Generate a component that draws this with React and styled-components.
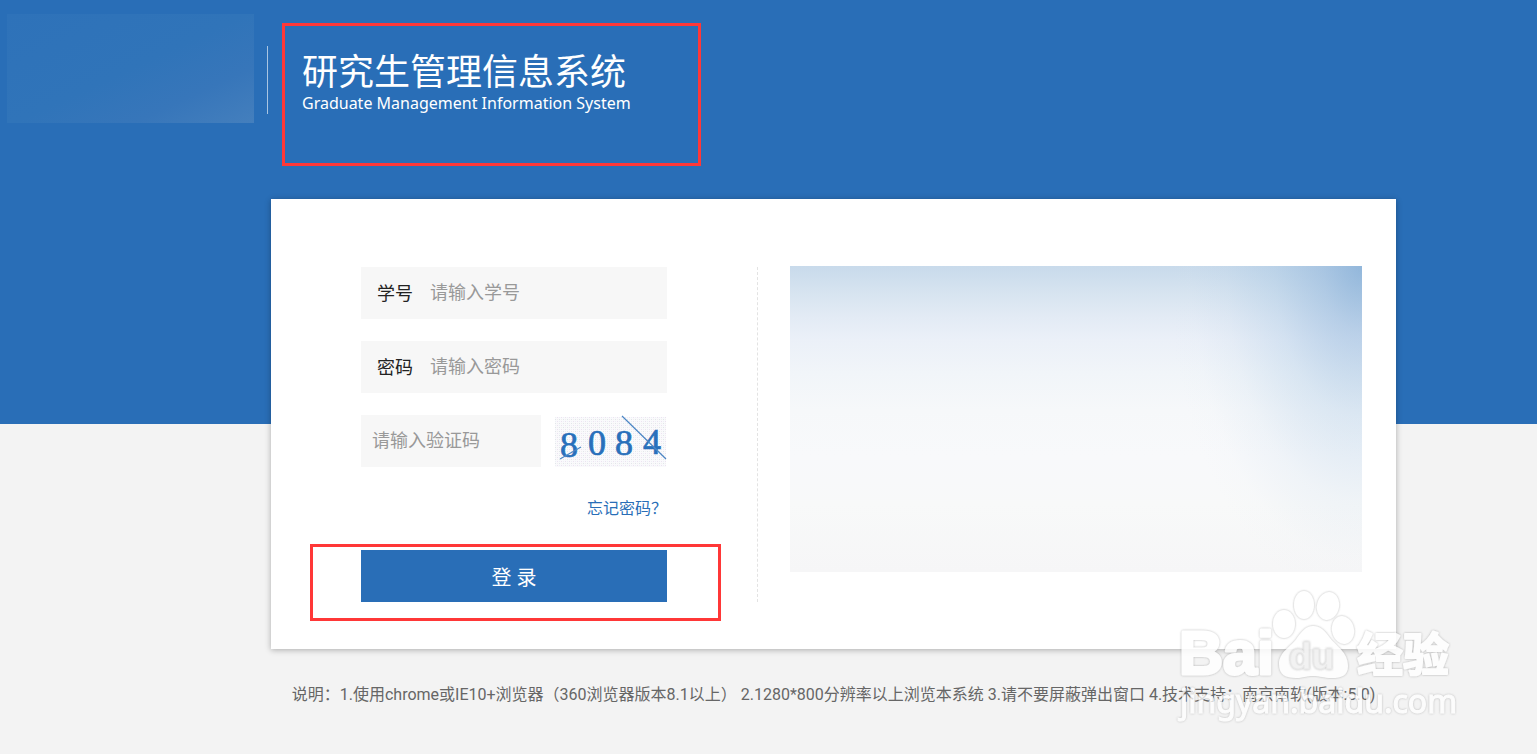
import React from "react";
import styled, { createGlobalStyle } from "styled-components";

const blue = "#296eb7";
const red = "#ff3737";

const GlobalStyle = createGlobalStyle`
  *, *::before, *::after { box-sizing: border-box; }
  body {
    margin: 0;
    background: #f3f3f3;
    font-family: "Noto Sans", "Noto Sans CJK SC", sans-serif;
  }
  input, button { font-family: inherit; }
`;

const Page = styled.div`
  position: relative;
  display: flex;
  flex-direction: column;
  min-height: 100vh;
  background: linear-gradient(${blue} 0 424px, #f3f3f3 424px);
`;

const Header = styled.header`
  display: flex;
  align-items: flex-start;
  height: 199px;
  padding: 14px 7px 0;
`;

const CrestPlate = styled.div`
  flex: none;
  width: 247px;
  height: 109px;
  background: linear-gradient(155deg, #2e72b9 0%, #3074b9 50%, #3776ba 75%, #447fbd 100%);
`;

const HeaderRule = styled.div`
  flex: none;
  width: 1px;
  height: 68px;
  margin: 32px 14px 0 13px;
  background: #a9c5e2;
`;

const TitleFrame = styled.div`
  width: 419px;
  height: 143px;
  margin-top: 9px;
  padding: 24px 17px;
  border: 3px solid ${red};
  color: #fff;
  white-space: nowrap;
`;

const Title = styled.h1`
  margin: 0;
  font-size: 36px;
  line-height: 44px;
  font-weight: 400;
`;

const Subtitle = styled.p`
  margin: 0;
  font-size: 16px;
  line-height: 18px;
`;

const Card = styled.main`
  display: flex;
  min-height: 450px;
  margin: 0 141px 0 271px;
  padding: 68px 34px 47px 90px;
  background: #fff;
  box-shadow: 0 1px 6px rgba(0, 0, 0, 0.3);
`;

const Form = styled.form`
  flex: none;
  display: flex;
  flex-direction: column;
  width: 306px;
`;

const Field = styled.div`
  display: flex;
  align-items: center;
  flex: 1;
  height: 52px;
  padding: 0 ${(p) => (p.$compact ? "11px" : "16px")};
  background: #f7f7f7;
`;

const FieldRow = styled.div`
  display: flex;
  margin-bottom: 22px;
`;

const FieldLabel = styled.label`
  flex: none;
  margin-right: 17px;
  color: #222;
  font-size: 18px;
  line-height: 24px;
`;

const Input = styled.input`
  flex: 1;
  min-width: 0;
  width: 100%;
  height: 48px;
  padding: 0 0 2px;
  border: 0;
  outline: 0;
  background: transparent;
  color: #222;
  font-size: 18px;
  &::placeholder { color: #999; opacity: 1; }
`;

const CaptchaImage = styled.svg`
  flex: none;
  display: block;
  width: 112px;
  height: 52px;
  margin-left: 14px;
`;

const ForgotLink = styled.a`
  align-self: flex-end;
  margin: 7px 0 30px;
  color: ${blue};
  font-size: 16px;
  line-height: 24px;
  text-decoration: none;
`;

const SubmitArea = styled.div`
  position: relative;
`;

const SubmitFrame = styled.div`
  position: absolute;
  inset: -6px -54px -19px -51px;
  border: 3px solid ${red};
  pointer-events: none;
`;

const SubmitButton = styled.button`
  display: block;
  width: 100%;
  height: 52px;
  padding: 0;
  border: 0;
  background: ${blue};
  color: #fff;
  font-size: 20px;
  white-space: pre;
  cursor: pointer;
`;

const Divider = styled.div`
  flex: none;
  margin: 0 32px 0 90px;
  border-left: 1px dashed #e3e3e3;
`;

const Photo = styled.div`
  flex: 1;
  height: 306px;
  margin-top: -1px;
  background:
    radial-gradient(ellipse 34% 110% at 100% 0%, rgba(116, 163, 210, 0.64) 0%, rgba(130, 172, 215, 0.46) 20%, rgba(150, 188, 223, 0.28) 45%, rgba(180, 206, 231, 0.13) 70%, rgba(215, 228, 242, 0.04) 88%, rgba(230, 238, 246, 0) 100%),
    linear-gradient(#c8daeb 0%, #d7e4f0 9%, #e3ebf5 17%, #ebf0f8 24%, #f1f5f9 35%, #f6f8fa 47%, #f8f9fb 62%, #f8f9f9 78%, #f6f6f7 100%);
`;

const Footnote = styled.footer`
  padding: 34px 141px 0 271px;
  color: #666;
  font-family: Roboto, "Noto Sans CJK SC", sans-serif;
  font-size: 16px;
  line-height: 24px;
  text-align: center;
  white-space: nowrap;
`;

const Watermark = styled.svg`
  position: absolute;
  right: 77px;
  bottom: 24px;
  width: 290px;
  height: 150px;
  pointer-events: none;
`;

function Captcha() {
  return (
    <CaptchaImage viewBox="0 0 112 52" role="img" aria-label="8084">
      <defs>
        <pattern id="speckle" width="4" height="4" patternUnits="userSpaceOnUse">
          <rect width="4" height="4" fill="#fafafc" />
          <rect width="1" height="1" fill="#e2e6ea" />
          <rect x="2" y="2" width="1" height="1" fill="#ece2f1" />
          <rect x="2" width="1" height="1" fill="#f0f0f0" />
          <rect y="2" width="1" height="1" fill="#edf1f5" />
        </pattern>
      </defs>
      <rect y="2" width="111" height="50" fill="url(#speckle)" />
      <g fill="#2870bb" stroke="#2870bb" strokeWidth="0.7" fontFamily='"Liberation Serif", serif' fontSize="36">
        <text x="5" y="42">8</text>
        <text x="33" y="40">0</text>
        <text x="60" y="40">8</text>
        <text x="88" y="39">4</text>
      </g>
      <path d="M5 44 L26 32 M67 1 L111 44" stroke="#4b86c4" strokeWidth="1.2" fill="none" />
    </CaptchaImage>
  );
}

function BaiduWatermark() {
  return (
    <Watermark viewBox="0 0 290 150" aria-hidden="true">
      <defs>
        <filter id="edge" x="-10%" y="-10%" width="120%" height="120%">
          <feDropShadow dx="0" dy="0" stdDeviation="1.3" floodColor="#777" floodOpacity="0.65" />
        </filter>
      </defs>
      <g filter="url(#edge)" fill="#fff" opacity="0.85">
        <ellipse cx="114" cy="44" rx="11" ry="14" />
        <ellipse cx="134" cy="25" rx="10" ry="14" />
        <ellipse cx="158" cy="26" rx="11" ry="14" transform="rotate(12 158 26)" />
        <ellipse cx="173" cy="50" rx="11" ry="14" transform="rotate(-12 173 50)" />
        <path d="M143 46 C151 46 155 51 160 58 C166 66 178 72 178 86 C178 96 171 98 162 98 C153 98 151 96 143 96 C135 96 133 98 126 98 C116 98 109 95 109 84 C109 72 121 67 127 58 C132 51 136 46 143 46 Z" />
        <g stroke="#fff" strokeWidth="3" strokeLinejoin="round" fontWeight="700">
          <text x="9" y="94" fontFamily='"Liberation Sans", sans-serif' fontSize="61">Bai</text>
          <text x="187" y="91" fontFamily='"Noto Sans CJK SC", sans-serif' fontSize="46" strokeWidth="2">经验</text>
        </g>
      </g>
      <g filter="url(#edge)" opacity="0.8">
        <text x="119" y="89" fill="#f0f0f0" stroke="#e4e4e4" strokeWidth="1" fontFamily='"Liberation Sans", sans-serif' fontSize="37" fontWeight="700">du</text>
      </g>
      <g filter="url(#edge)" opacity="0.75">
        <text x="10" y="133" fill="#fff" stroke="#fff" strokeWidth="1" fontFamily='"Noto Sans", sans-serif' fontSize="32">jingyan.baidu.com</text>
      </g>
    </Watermark>
  );
}

export default function App() {
  return (
    <>
      <GlobalStyle />
      <Page>
        <Header>
          <CrestPlate />
          <HeaderRule />
          <TitleFrame>
            <Title>研究生管理信息系统</Title>
            <Subtitle>Graduate Management Information System</Subtitle>
          </TitleFrame>
        </Header>
        <Card>
          <Form onSubmit={(e) => e.preventDefault()}>
            <FieldRow>
              <Field>
                <FieldLabel htmlFor="student">学号</FieldLabel>
                <Input id="student" type="text" placeholder="请输入学号" />
              </Field>
            </FieldRow>
            <FieldRow>
              <Field>
                <FieldLabel htmlFor="password">密码</FieldLabel>
                <Input id="password" type="password" placeholder="请输入密码" />
              </Field>
            </FieldRow>
            <FieldRow>
              <Field $compact>
                <Input type="text" aria-label="验证码" placeholder="请输入验证码" />
              </Field>
              <Captcha />
            </FieldRow>
            <ForgotLink href="#forgot">忘记密码？</ForgotLink>
            <SubmitArea>
              <SubmitButton type="submit">登 录</SubmitButton>
              <SubmitFrame />
            </SubmitArea>
          </Form>
          <Divider />
          <Photo />
        </Card>
        <Footnote>
          说明：1.使用chrome或IE10+浏览器（360浏览器版本8.1以上） 2.1280*800分辨率以上浏览本系统 3.请不要屏蔽弹出窗口 4.技术支持：南京南软(版本:5.0)
        </Footnote>
        <BaiduWatermark />
      </Page>
    </>
  );
}
